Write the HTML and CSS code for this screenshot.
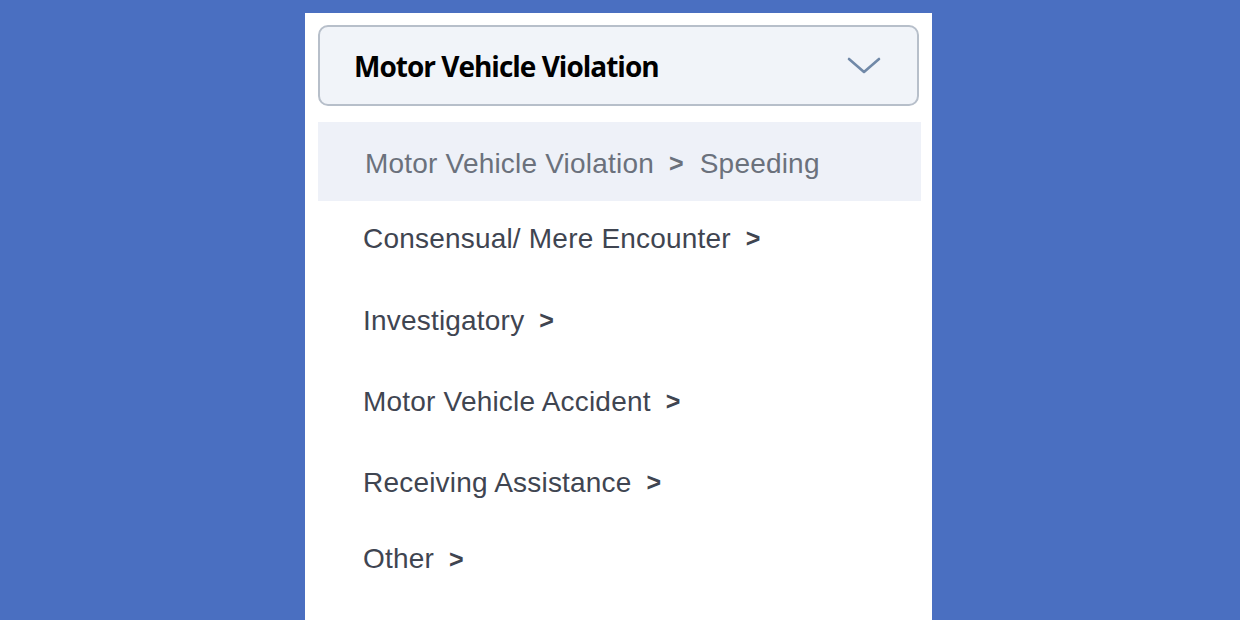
FILE: index.html
```html
<!DOCTYPE html>
<html lang="en">
  <head>
    <meta charset="UTF-8" />
    <meta name="viewport" content="width=device-width, initial-scale=1.0" />
    <title>Stop Type</title>
    <link rel="stylesheet" href="styles.css">
  </head>
  <body>
    <div class="panel">
      <div class="select">
        <span class="select-label">Motor Vehicle Violation</span>
        <svg class="chevron" width="34" height="18" viewBox="0 0 34 18">
          <polyline points="2,2 17,15 32,2" fill="none" stroke="#7189a8" stroke-width="2.6" stroke-linecap="round" stroke-linejoin="round" />
        </svg>
      </div>

      <ul class="options">
        <li class="option is-selected">Motor Vehicle Violation <b>&gt;</b> Speeding</li>
        <li class="option">Consensual/ Mere Encounter <b>&gt;</b></li>
        <li class="option">Investigatory <b>&gt;</b></li>
        <li class="option">Motor Vehicle Accident <b>&gt;</b></li>
        <li class="option">Receiving Assistance <b>&gt;</b></li>
        <li class="option">Other <b>&gt;</b></li>
      </ul>
    </div>
  </body>
</html>
```

FILE: styles.css
```css
body {
  margin: 0;
  height: 100vh;
  background-color: #4a6fc1;
  display: flex;
  justify-content: center;
  font-family: "Liberation Sans", Arial, sans-serif;
  overflow: hidden;
}

.panel {
  width: 627px;
  margin-top: 13px;
  margin-left: -3px;
  background-color: #fff;
  padding: 12px 11px 0 13px;
  box-sizing: border-box;
}

.select {
  height: 81px;
  width: 601px;
  box-sizing: border-box;
  border: 2px solid #b7bfca;
  border-radius: 10px;
  background-color: #f1f4f9;
  display: flex;
  align-items: center;
  justify-content: space-between;
  padding: 0 36px 0 34px;
}

.select-label {
  font-family: "Open Sans", sans-serif;
  font-weight: 700;
  font-size: 28px;
  letter-spacing: -1px;
  color: #000;
}

.chevron {
  display: block;
}

.options {
  list-style: none;
  margin: 16px 0 0;
  padding: 0;
}

.option {
  height: 81px;
  box-sizing: border-box;
  display: flex;
  align-items: center;
  padding-left: 45px;
  font-size: 28px;
  letter-spacing: 0.2px;
  color: #3f4551;
}

.option:nth-child(2) {
  height: 79px;
  padding-bottom: 4px;
}

.option:last-child {
  height: 72px;
}

.option b {
  margin-left: 15px;
  font-size: 25px;
}

.option.is-selected {
  height: 79px;
  padding-left: 47px;
  padding-top: 4px;
  background-color: #eef1f8;
  color: #6b717c;
}

.option.is-selected b {
  margin-right: 16px;
}
```
